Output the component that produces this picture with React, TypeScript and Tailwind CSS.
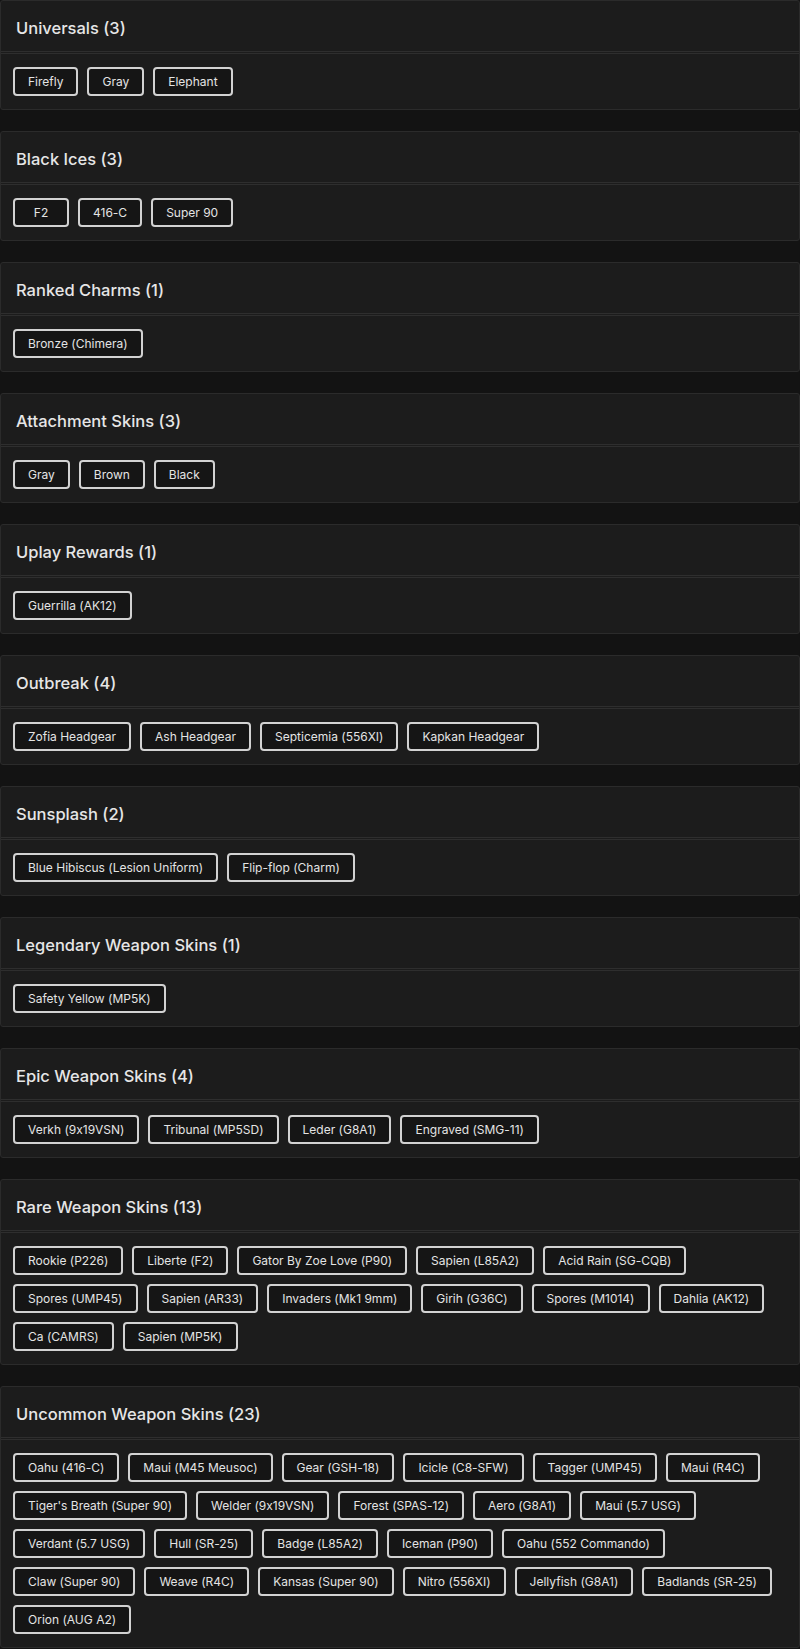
const sections: { title: string; items: string[] }[] = [
  { title: 'Universals', items: ['Firefly', 'Gray', 'Elephant'] },
  { title: 'Black Ices', items: ['F2', '416-C', 'Super 90'] },
  { title: 'Ranked Charms', items: ['Bronze (Chimera)'] },
  { title: 'Attachment Skins', items: ['Gray', 'Brown', 'Black'] },
  { title: 'Uplay Rewards', items: ['Guerrilla (AK12)'] },
  { title: 'Outbreak', items: ['Zofia Headgear', 'Ash Headgear', 'Septicemia (556XI)', 'Kapkan Headgear'] },
  { title: 'Sunsplash', items: ['Blue Hibiscus (Lesion Uniform)', 'Flip-flop (Charm)'] },
  { title: 'Legendary Weapon Skins', items: ['Safety Yellow (MP5K)'] },
  { title: 'Epic Weapon Skins', items: ['Verkh (9x19VSN)', 'Tribunal (MP5SD)', 'Leder (G8A1)', 'Engraved (SMG-11)'] },
  {
    title: 'Rare Weapon Skins',
    items: [
      'Rookie (P226)', 'Liberte (F2)', 'Gator By Zoe Love (P90)', 'Sapien (L85A2)', 'Acid Rain (SG-CQB)',
      'Spores (UMP45)', 'Sapien (AR33)', 'Invaders (Mk1 9mm)', 'Girih (G36C)', 'Spores (M1014)', 'Dahlia (AK12)',
      'Ca (CAMRS)', 'Sapien (MP5K)',
    ],
  },
  {
    title: 'Uncommon Weapon Skins',
    items: [
      'Oahu (416-C)', 'Maui (M45 Meusoc)', 'Gear (GSH-18)', 'Icicle (C8-SFW)', 'Tagger (UMP45)', 'Maui (R4C)',
      "Tiger's Breath (Super 90)", 'Welder (9x19VSN)', 'Forest (SPAS-12)', 'Aero (G8A1)', 'Maui (5.7 USG)',
      'Verdant (5.7 USG)', 'Hull (SR-25)', 'Badge (L85A2)', 'Iceman (P90)', 'Oahu (552 Commando)',
      'Claw (Super 90)', 'Weave (R4C)', 'Kansas (Super 90)', 'Nitro (556XI)', 'Jellyfish (G8A1)', 'Badlands (SR-25)',
      'Orion (AUG A2)',
    ],
  },
];

function Section({ title, items }: { title: string; items: string[] }) {
  return (
    <div className="bg-[#1c1c1c] border border-[#2b2b2b] rounded-[3px]">
      <div className="h-[53px] px-[15px] pt-[4px] flex items-center border-b-[3px] border-double border-[#2e2e2e]">
        <h2 className="text-[16.5px] font-medium text-[#e6e6e6]">
          {title} ({items.length})
        </h2>
      </div>
      <div className="px-3 pt-[13px] pb-[13px] flex flex-wrap gap-[9px]">
        {items.map((item, i) => (
          <button
            key={i}
            className="h-[29px] px-[13px] min-w-[56px] bg-[#151515] border-2 border-[#d2d2d2] rounded-[4px] text-[12px] text-[#e4e4e4] whitespace-nowrap"
          >
            {item}
          </button>
        ))}
      </div>
    </div>
  );
}

export default function App() {
  return (
    <div className="min-h-screen bg-[#131313] font-['Inter','Noto_Sans',sans-serif] [font-feature-settings:'calt'_0]">
      <div className="flex flex-col gap-[21px]">
        {sections.map((s) => (
          <Section key={s.title} title={s.title} items={s.items} />
        ))}
      </div>
    </div>
  );
}
